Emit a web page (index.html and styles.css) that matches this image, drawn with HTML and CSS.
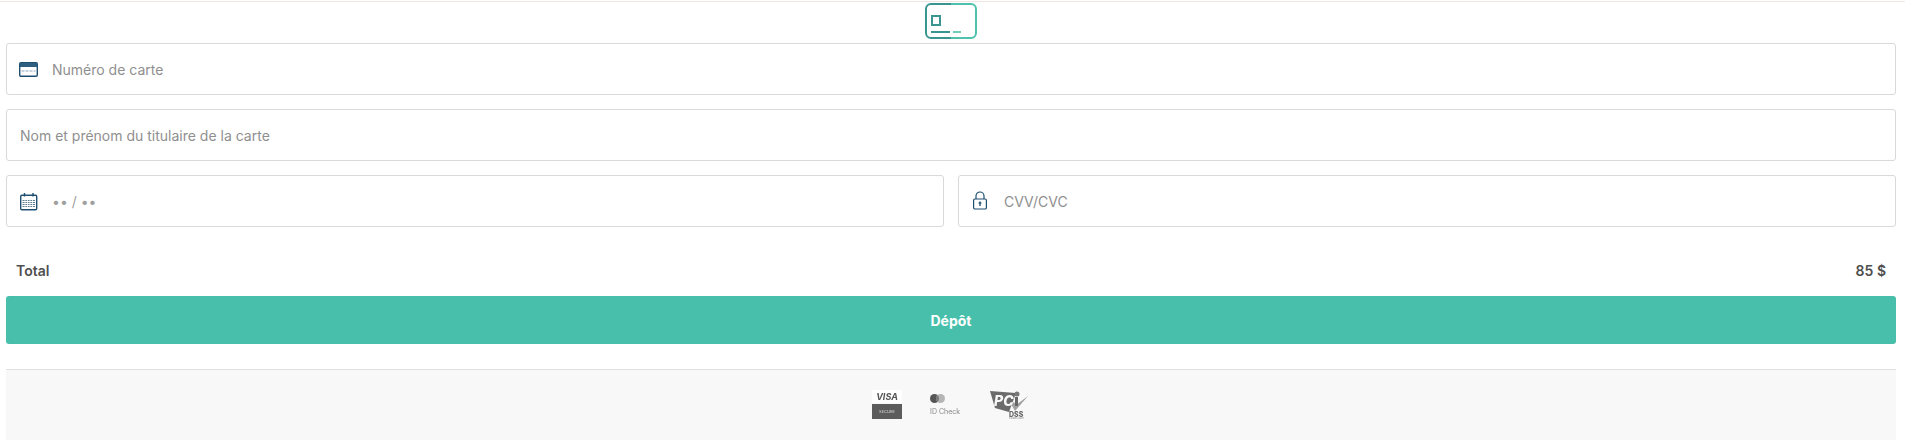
FILE: index.html
```html
<!DOCTYPE html>
<html lang="fr">

<head>
    <meta charset="UTF-8">
    <title>Dépôt</title>
    <link rel="stylesheet" href="styles.css">
</head>

<body>
    <div class="method-tab">
        <svg class="method-icon" width="52" height="36" viewBox="0 0 52 36" fill="none">
            <defs>
                <linearGradient id="tabGrad" gradientUnits="userSpaceOnUse" x1="0" y1="0" x2="52" y2="0">
                    <stop offset="0.5" stop-color="#3a9490"/>
                    <stop offset="0.5" stop-color="#4fc0ab"/>
                </linearGradient>
            </defs>
            <rect x="1" y="1" width="50" height="34" rx="5" stroke="url(#tabGrad)" stroke-width="2"/>
            <rect x="7" y="13" width="8" height="9" stroke="#3a9490" stroke-width="2"/>
            <rect x="6" y="28" width="19" height="2" fill="#3a9490"/>
            <rect x="28" y="28" width="8" height="2" fill="#6fcdbb"/>
        </svg>
    </div>

    <form class="card-form">
        <div class="field">
            <svg class="field-icon" width="20" height="20" viewBox="0 0 20 20">
                <rect x="0.7" y="3.7" width="17.6" height="13.6" rx="1.2" fill="#fff" stroke="#1f4f70" stroke-width="1.4"/>
                <rect x="1" y="4" width="17" height="4" fill="#2f5f80"/>
                <path d="M2.5 12h14" stroke="#8fa9bb" stroke-width="1" stroke-dasharray="3 1"/>
            </svg>
            <span class="placeholder">Numéro de carte</span>
        </div>

        <div class="field">
            <span class="placeholder">Nom et prénom du titulaire de la carte</span>
        </div>

        <div class="field-row">
            <div class="field">
                <svg class="field-icon" width="20" height="20" viewBox="0 0 20 20">
                    <rect x="1.7" y="4.2" width="16" height="14.6" rx="1.2" fill="#fff" stroke="#1f4f70" stroke-width="1.4"/>
                    <path d="M5.5 2v3.5M14 2v3.5" stroke="#1f4f70" stroke-width="1.4"/>
                    <path d="M3.5 9.500h12.500M3.500 11.500h12.500M3.500 13.500h12.500M3.500 15.500h12.500" stroke="#5f7f95" stroke-width="1.2"/>
                    <path d="M6 9v7.500M8.500 9v7.500M11 9v7.500M13.500 9v7.500" stroke="#fff" stroke-width="0.8"/>
                </svg>
                <span class="placeholder placeholder-date">•• / ••</span>
            </div>
            <div class="field">
                <svg class="field-icon" width="20" height="20" viewBox="0 0 20 20">
                    <path d="M5 8V5a4 4 0 0 1 8 0V8" fill="none" stroke="#1f4f70" stroke-width="1.2"/>
                    <rect x="2.6" y="8" width="12.8" height="10" rx="1.3" fill="#fff" stroke="#1f4f70" stroke-width="1.2"/>
                    <path d="M9 10.5v4.5M7.7 12h2.6" stroke="#1f4f70" stroke-width="1.3"/>
                </svg>
                <span class="placeholder">CVV/CVC</span>
            </div>
        </div>

        <div class="total">
            <span>Total</span>
            <span>85 $</span>
        </div>

        <button class="submit" type="button">Dépôt</button>
    </form>

    <footer class="badges">
        <div class="badge-visa">
            <span class="visa-name">VISA</span>
            <span class="visa-secure">SECURE</span>
        </div>
        <div class="badge-idcheck">
            <svg width="15" height="9" viewBox="0 0 15 9">
                <circle cx="4.5" cy="4.5" r="4.5" fill="#555"/>
                <circle cx="10.5" cy="4.5" r="4.5" fill="#b5b5b5"/>
                <path d="M7.5 1.1a4.5 4.5 0 0 1 0 6.8a4.5 4.5 0 0 1 0-6.8z" fill="#7a7a7a"/>
            </svg>
            <span>ID Check</span>
        </div>
        <svg class="badge-pci" width="40" height="28" viewBox="0 0 40 28">
            <path d="M0 0l26 2-7 19-14-4z" fill="#6b6b6b"/>
            <path d="M21 13l4 7 13-15-12 9-2-3z" fill="#a0a0a0"/>
            <rect x="25" y="6" width="3" height="9" fill="#666"/>
            <circle cx="27" cy="3" r="2.5" fill="#777"/>
            <text x="4" y="15" class="pci-text">PC</text>
            <text x="19" y="26" class="pci-dss">DSS</text>
            <text x="19" y="28" class="pci-note">COMPLIANT</text>
        </svg>
    </footer>
</body>

</html>
```

FILE: styles.css
```css
* {
    margin: 0;
    padding: 0;
    box-sizing: border-box;
    font-family: 'Inter', sans-serif;
}

body {
    background-color: #fff;
    color: #4f4f4f;
    height: 440px;
    overflow: hidden;
    padding-top: 1px;
}

.method-tab {
    display: flex;
    justify-content: center;
    border-top: 1px solid #f3e6e0;
    height: 42px;
    padding: 1px 3px 0 0;
}

.method-icon {
    display: block;
}

.card-form {
    display: flex;
    flex-direction: column;
    gap: 14px;
    padding: 0 9px 0 6px;
}

.field-row {
    display: flex;
    gap: 14px;
}

.field-row .field {
    flex: 1;
}

.field {
    display: flex;
    align-items: center;
    height: 52px;
    padding: 0 13px;
    border: 1px solid #d9d9d9;
    border-radius: 3px;
    background-color: #fff;
}

.field-icon {
    flex: none;
    margin: 0 13px 0 -1px;
}

.placeholder {
    font-size: 14px;
    color: #8f8f8f;
}

.placeholder-date {
    color: #a0a0a0;
}

.total {
    display: flex;
    justify-content: space-between;
    padding: 21px 10px 0;
    margin-bottom: 1px;
    font-size: 14px;
    font-weight: 600;
    line-height: 18px;
}

.submit {
    height: 48px;
    margin-top: 1px;
    border: none;
    border-radius: 3px;
    background-color: #48bfab;
    color: #fff;
    font-size: 14px;
    font-weight: 700;
}

.badges {
    display: flex;
    justify-content: center;
    align-items: flex-start;
    gap: 28px;
    height: 71px;
    margin: 25px 9px 0 6px;
    padding-top: 20px;
    border-top: 1px solid #e0e0e0;
    background-color: #f8f8f8;
}

.badge-visa {
    display: flex;
    flex-direction: column;
    width: 30px;
    height: 29px;
    text-align: center;
    filter: blur(0.4px);
}

.visa-name {
    height: 13px;
    background-color: #fff;
    color: #555;
    font-size: 9px;
    font-weight: 700;
    font-style: italic;
    line-height: 13px;
}

.visa-secure {
    height: 15px;
    margin-top: 1px;
    background-color: #5c5c5c;
    color: #ddd;
    font-size: 4px;
    line-height: 15px;
}

.badge-idcheck {
    display: flex;
    flex-direction: column;
    align-items: flex-start;
    gap: 5px;
    width: 32px;
    padding-top: 4px;
    font-size: 7px;
    line-height: 8px;
    color: #888;
    white-space: nowrap;
    filter: blur(0.4px);
}

.badge-pci {
    flex: none;
    margin-top: 1px;
    filter: blur(0.4px);
}

.pci-text {
    font-size: 14px;
    font-weight: 800;
    font-style: italic;
    fill: #f8f8f8;
}

.pci-dss {
    font-size: 7px;
    font-weight: 800;
    fill: #666;
}

.pci-note {
    font-size: 2.5px;
    fill: #777;
}
```
